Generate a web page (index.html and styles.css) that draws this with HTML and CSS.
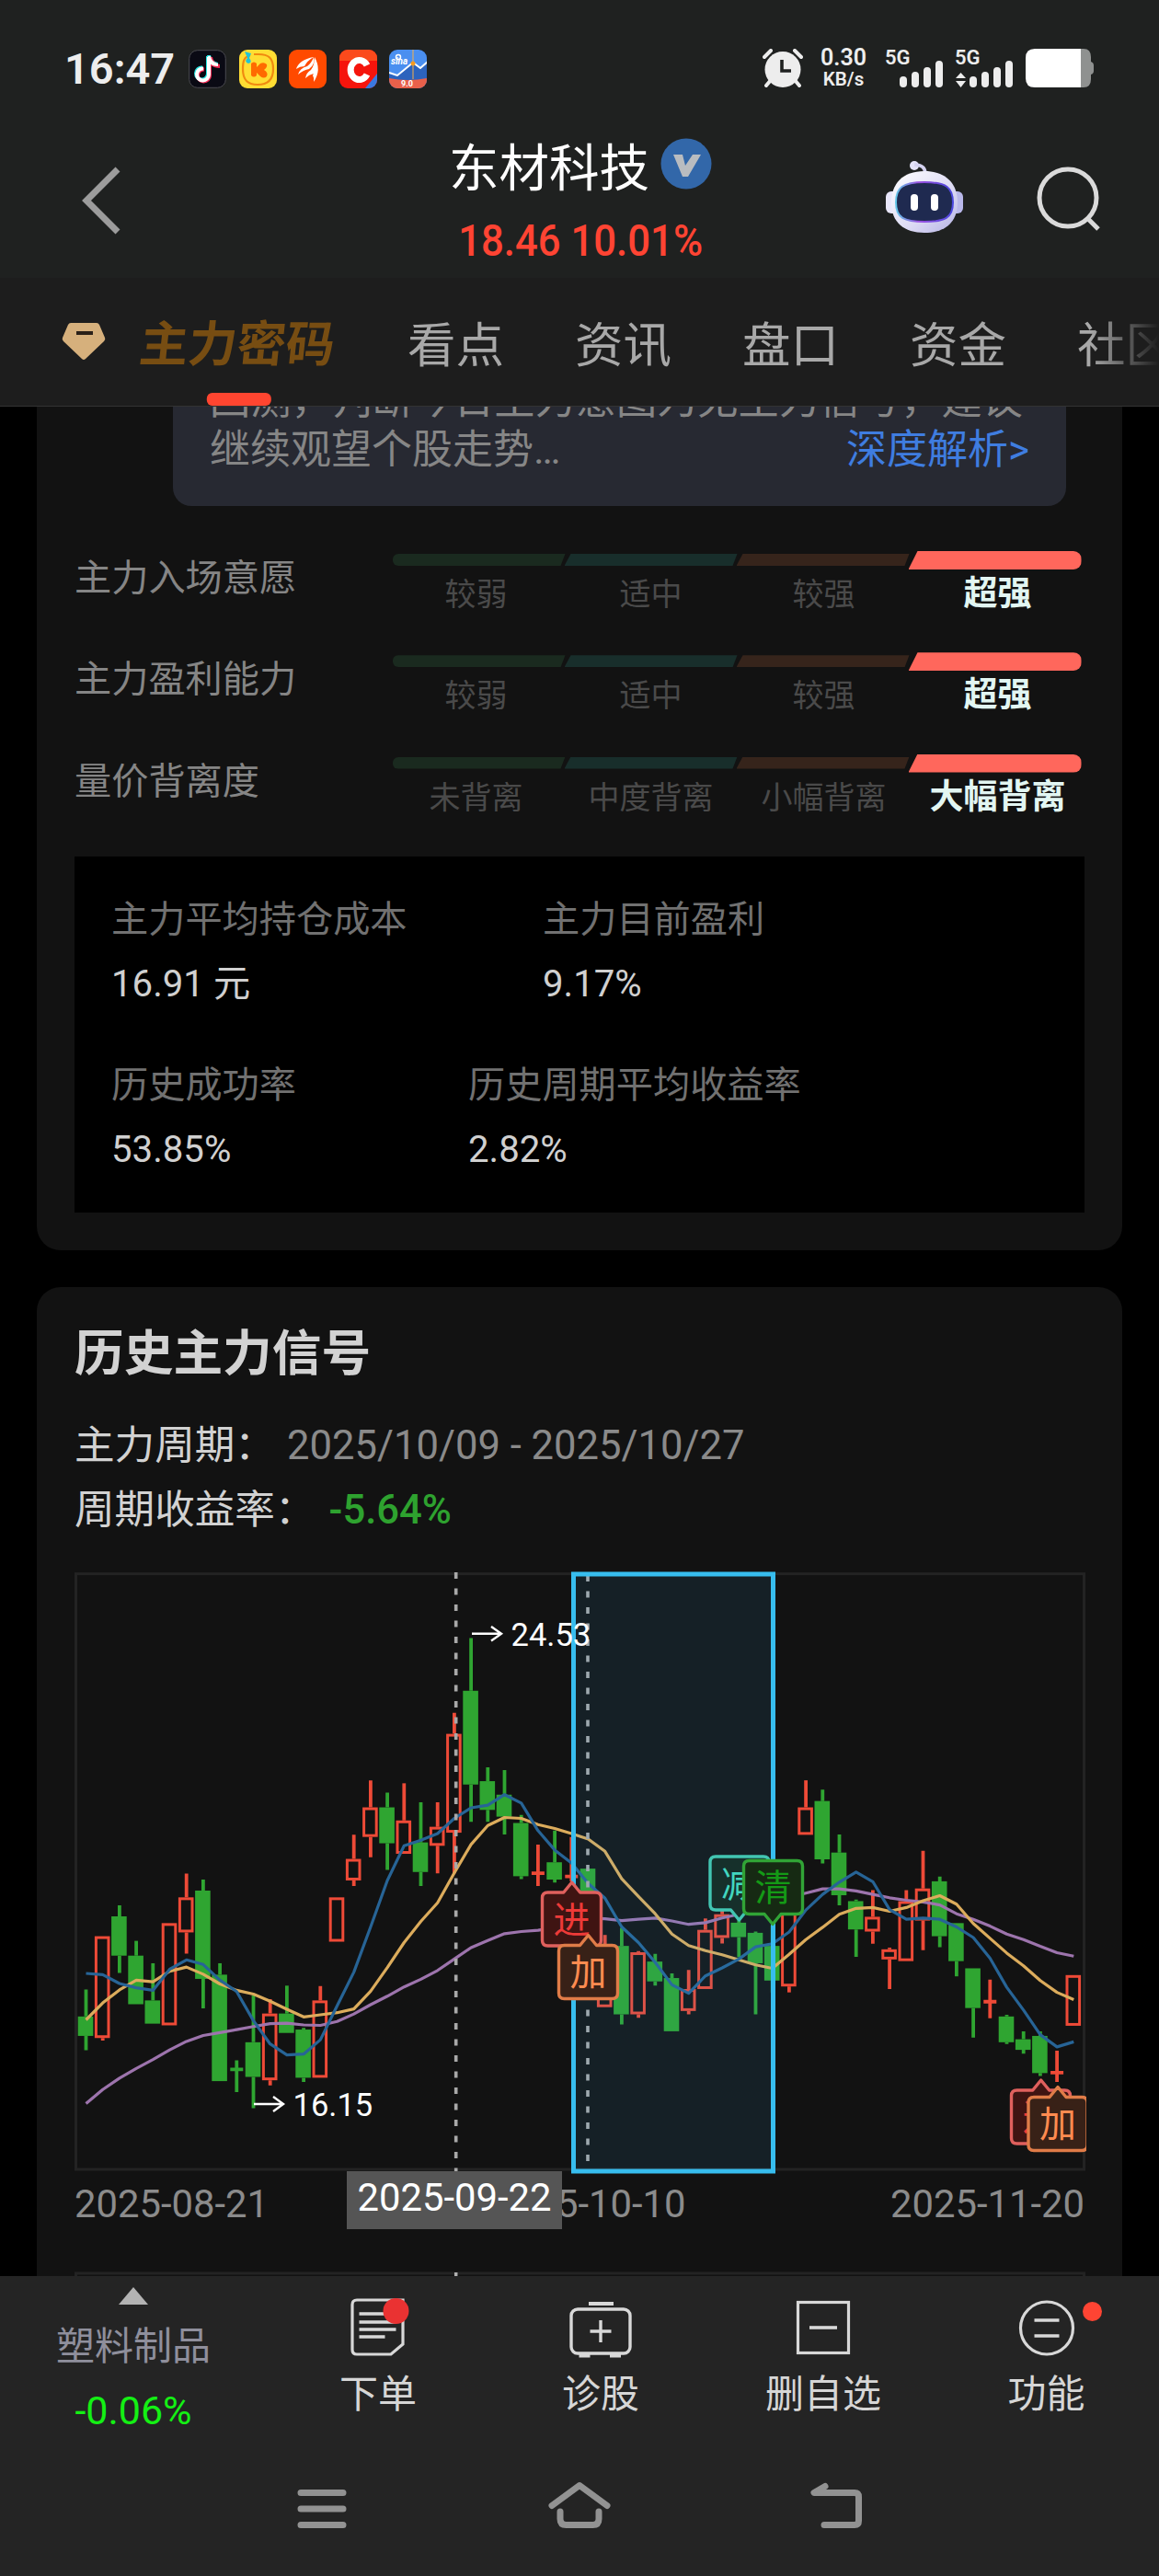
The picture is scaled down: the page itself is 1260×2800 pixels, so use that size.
FILE: index.html
```html
<!DOCTYPE html>
<html lang="zh-CN">
<head>
    <meta charset="UTF-8">
    <meta name="viewport" content="width=device-width, initial-scale=1.0">
    <title>东材科技 - 主力密码</title>
    <link rel="stylesheet" href="styles.css">
</head>
<body>

<div class="phone">
    <header class="header">
        <div class="status-bar">
            <span class="clock">16:47</span>
            <div class="app-icons">
                <svg width="41" height="42" viewBox="0 0 41 42">
                    <rect x=".7" y=".7" width="39.6" height="40.6" rx="9" fill="#0a0a14" stroke="#4a4a50"/>
                    <path d="M22 8v19a6.500 6.500 0 1 1-6-6.500" transform="translate(-1 -1)" fill="none" stroke="#25e5e2" stroke-width="4"/>
                    <path d="M21 7h4c1 5 4 7 8 8v4c-4 0-7-1-10-3z" transform="translate(-1 -1)" fill="#25e5e2"/>
                    <path d="M22 8v19a6.500 6.500 0 1 1-6-6.500" transform="translate(1 1)" fill="none" stroke="#f52c56" stroke-width="4"/>
                    <path d="M21 7h4c1 5 4 7 8 8v4c-4 0-7-1-10-3z" transform="translate(1 1)" fill="#f52c56"/>
                    <path d="M22 8v19a6.500 6.500 0 1 1-6-6.500" fill="none" stroke="#fff" stroke-width="4"/>
                    <path d="M21 7h3c1 5 4 7 8 8v3c-4 0-7-1-9-3z" fill="#fff"/>
                </svg>
                <svg width="41" height="42" viewBox="0 0 41 42">
                    <rect width="41" height="42" rx="9" fill="#ffdd33"/>
                    <path d="M12 6c-7 2-8 7-8 15 0 12 5 17 16 17s17-5 17-17S32 5 21 5h-5" fill="none" stroke="#f08a10" stroke-width="2.2"/>
                    <path d="M13 15q3-3 6 0v4l4-4q4-2 7 1 1 3-3 6 5 3 3 7-3 3-7 0l-4-4v3q-3 3-6 0z" fill="#ff6a00"/>
                    <path d="M6 2l7 2-2 5q4 5-1 6-5-2-1-6z" fill="#20c4d8"/>
                </svg>
                <svg width="41" height="42" viewBox="0 0 41 42">
                    <rect width="41" height="42" rx="9" fill="#ff4a00"/>
                    <path d="M8 21Q11 11 27 8q-7 4-10 10-5 0-9 3zM10 27q2-7 10-9 5-4 7-10 2 8-5 13-6 1-12 6zM18 31q1-6 6-9 4-5 4-14 4 11-1 18-5 1-9 5zM27 35q1-4-1-7 5-8 2-20 8 14-1 27z" fill="#fff"/>
                </svg>
                <svg width="41" height="42" viewBox="0 0 41 42">
                    <defs><clipPath id="rc"><rect width="41" height="42" rx="9"/></clipPath></defs>
                    <g clip-path="url(#rc)">
                        <rect width="41" height="42" fill="#f5140c"/>
                        <rect width="41" height="12" fill="#fb4a1c"/>
                        <path d="M30 17a9.500 10.500 0 1 0 0 10" fill="none" stroke="#fff" stroke-width="7"/>
                        <path d="M41 26v16H28z" fill="#3a78e0"/>
                    </g>
                </svg>
                <svg width="41" height="42" viewBox="0 0 41 42">
                    <g clip-path="url(#rc)">
                        <rect width="41" height="42" fill="#4a8ff0"/>
                        <path d="M0 26l8 3 18-15 8 6 7-7v20H0z" fill="#2c63bd"/>
                        <path d="M0 25l9 3 17-14 8 6 8-7" fill="none" stroke="#fff" stroke-width="2"/>
                        <path d="M26 0v32" stroke="#f5b04a" stroke-width="1"/>
                        <circle cx="26" cy="15" r="2.500" fill="#f59a20"/>
                        <path d="M0 31q20 4 41 0v11H0z" fill="#e8604a"/>
                        <circle cx="10" cy="8" r="2.500" fill="none" stroke="#fff" stroke-width="1.500"/>
                        <text x="2" y="16" class="app-sina">sina</text>
                        <text x="13" y="40" class="app-ver">9.0</text>
                    </g>
                </svg>
            </div>
            <div class="status-right">
                <svg class="alarm" width="44" height="42" viewBox="0 0 44 42">
                    <ellipse cx="22" cy="22.500" rx="19.500" ry="19.500" fill="#ededed"/>
                    <path d="M2 9l7-7M42 9l-7-7M4 40l5-6M40 40l-5-6" stroke="#ededed" stroke-width="4" stroke-linecap="round"/>
                    <path d="M21 12v12h10" fill="none" stroke="#1f2120" stroke-width="3.600"/>
                </svg>
                <div class="net-speed"><span>0.30</span><small>KB/s</small></div>
                <svg class="signal" width="64" height="42" viewBox="0 0 64 42">
                    <text x="0" y="17" class="net-type">5G</text>
                    <path d="M20 34v4M33 29v9M46 24v14M59 17v21" stroke="#ededed" stroke-width="8" stroke-linecap="round"/>
                </svg>
                <svg class="signal2" width="64" height="42" viewBox="0 0 64 42">
                    <text x="0" y="17" class="net-type">5G</text>
                    <path d="M1 32l5.500-6 5.500 6zM1 35l5.500 7 5.500-7z" fill="#ededed"/>
                    <path d="M20 34v4M33 29v9M46 24v14M59 17v21" stroke="#ededed" stroke-width="8" stroke-linecap="round"/>
                </svg>
                <svg width="74" height="42" viewBox="0 0 74 42">
                    <path d="M58 0h5q8 0 8 9v5q3 1 3 4v6q0 3-3 4v5q0 9-8 9h-5z" fill="#8f9190"/>
                    <path d="M60 0v42H10Q0 42 0 32V10Q0 0 10 0z" fill="#fff"/>
                </svg>
            </div>
        </div>

        <div class="title-row">
            <svg class="back" width="44" height="74" viewBox="0 0 44 74">
                <path d="M40 3L6 37l34 34" fill="none" stroke="#9c9c9c" stroke-width="7"/>
            </svg>
            <div class="stock">
                <h1 class="stock-name">东材科技
                    <svg width="56" height="56" viewBox="0 0 56 56">
                        <circle cx="28" cy="28" r="27.500" fill="#3267a9"/>
                        <path d="M14 18h10l3 12 8-12h9L30 42h-6z" fill="#b9bcc0"/>
                    </svg>
                </h1>
                <p class="stock-price">18.46 10.01%</p>
            </div>
            <div class="title-actions">
                <svg width="84" height="80" viewBox="0 0 84 80">
                    <defs>
                        <linearGradient id="head" x1="0" y1="0" x2="1" y2="1">
                            <stop offset="0" stop-color="#ffffff"/>
                            <stop offset=".6" stop-color="#dcdaf4"/>
                            <stop offset="1" stop-color="#b4b2e4"/>
                        </linearGradient>
                        <linearGradient id="face" x1="0" y1="0" x2="1" y2="0">
                            <stop offset="0" stop-color="#63c6e8"/>
                            <stop offset=".4" stop-color="#9a50e0"/>
                            <stop offset="1" stop-color="#4a48e0"/>
                        </linearGradient>
                    </defs>
                    <circle cx="31" cy="6" r="5" fill="#e4e2f8"/>
                    <path d="M31 5q12 0 12 10" fill="none" stroke="#d4d2f0" stroke-width="3.500"/>
                    <rect x="0" y="34" width="14" height="24" rx="6" fill="#e8e6fa"/>
                    <rect x="70" y="34" width="14" height="24" rx="6" fill="#b9b8ea"/>
                    <path d="M42 12C66 12 78 26 78 46 78 68 64 79 42 79S6 68 6 46C6 26 18 12 42 12z" fill="url(#head)"/>
                    <path d="M42 24c24 0 31 6 31 22 0 17-9 21-31 21s-31-4-31-21c0-16 7-22 31-22z" fill="#1f2a50" stroke="url(#face)" stroke-width="2"/>
                    <rect x="27" y="37" width="8" height="18" rx="4" fill="#fff"/>
                    <rect x="49" y="37" width="8" height="18" rx="4" fill="#fff"/>
                </svg>
                <svg class="search" width="72" height="74" viewBox="0 0 72 74">
                    <circle cx="35" cy="35" r="31" fill="none" stroke="#dadada" stroke-width="5"/>
                    <path d="M56 57l12 12" stroke="#dadada" stroke-width="5"/>
                </svg>
            </div>
        </div>
    </header>

    <nav class="tabs">
        <svg class="diamond" width="48" height="42" viewBox="0 0 48 42">
            <path d="M10 1h28q2 0 3 2l6 14q1 2-1 4L26 40q-2 2-4 0L2 21q-2-2-1-4L7 3q1-2 3-2z" fill="#d6b07c"/>
            <path d="M16 12h18" stroke="#2a2018" stroke-width="4"/>
        </svg>
        <a class="tab active">主力密码</a>
        <a class="tab">看点</a>
        <a class="tab">资讯</a>
        <a class="tab">盘口</a>
        <a class="tab">资金</a>
        <a class="tab">社区</a>
    </nav>

    <main class="content">
        <section class="card card-top">
            <div class="bubble">
                <p>回测，判断今日主力意图为无主力信号，建议</p>
                <p class="bubble-last">继续观望个股走势…<a class="more">深度解析&gt;</a></p>
            </div>

            <div class="ratings">
                <div class="rating">
                    <span class="rating-name">主力入场意愿</span>
                    <div class="levels">
                        <div class="level l1"><i></i><span>较弱</span></div>
                        <div class="level l2"><i></i><span>适中</span></div>
                        <div class="level l3"><i></i><span>较强</span></div>
                        <div class="level l4"><i></i><span>超强</span></div>
                    </div>
                </div>
                <div class="rating">
                    <span class="rating-name">主力盈利能力</span>
                    <div class="levels">
                        <div class="level l1"><i></i><span>较弱</span></div>
                        <div class="level l2"><i></i><span>适中</span></div>
                        <div class="level l3"><i></i><span>较强</span></div>
                        <div class="level l4"><i></i><span>超强</span></div>
                    </div>
                </div>
                <div class="rating">
                    <span class="rating-name">量价背离度</span>
                    <div class="levels">
                        <div class="level l1"><i></i><span>未背离</span></div>
                        <div class="level l2"><i></i><span>中度背离</span></div>
                        <div class="level l3"><i></i><span>小幅背离</span></div>
                        <div class="level l4"><i></i><span>大幅背离</span></div>
                    </div>
                </div>
            </div>

            <div class="stats">
                <div class="stats-row">
                    <div class="stat wide">
                        <p class="stat-name">主力平均持仓成本</p>
                        <p class="stat-value">16.91 元</p>
                    </div>
                    <div class="stat">
                        <p class="stat-name">主力目前盈利</p>
                        <p class="stat-value">9.17%</p>
                    </div>
                </div>
                <div class="stats-row">
                    <div class="stat narrow">
                        <p class="stat-name">历史成功率</p>
                        <p class="stat-value">53.85%</p>
                    </div>
                    <div class="stat">
                        <p class="stat-name">历史周期平均收益率</p>
                        <p class="stat-value">2.82%</p>
                    </div>
                </div>
            </div>
        </section>

        <section class="card card-history">
            <h2>历史主力信号</h2>
            <p class="line">主力周期：<span class="range">2025/10/09 - 2025/10/27</span></p>
            <p class="line">周期收益率：<span class="loss">-5.64%</span></p>

            <svg class="chart" id="chart" width="1100" height="670" viewBox="11 10 1100 670"></svg>

            <div class="dates">
                <span>2025-08-21</span>
                <span class="date-mid">2025-10-10</span>
                <span>2025-11-20</span>
                <span class="date-cursor">2025-09-22</span>
            </div>
            <svg class="chart-next" width="1100" height="8" viewBox="11 0 1100 8">
                <rect x="12.500" y="2" width="1096" height="40" fill="none" stroke="#232323" stroke-width="3"/>
                <path d="M425.700 1v7" stroke="#b0b0b0" stroke-width="3.500"/>
            </svg>
        </section>
    </main>

    <footer class="footer">
        <div class="toolbar">
            <div class="tool index">
                <svg width="32" height="19" viewBox="0 0 32 19"><path d="M16 0l16 19H0z" fill="#b3b3b3"/></svg>
                <span class="index-name">塑料制品</span>
                <span class="index-value">-0.06%</span>
            </div>
            <div class="tool">
                <svg width="70" height="70" viewBox="0 0 70 70">
                    <path d="M12 6h50v48L49 65H12q-5 0-5-5V11q0-5 5-5z" fill="none" stroke="#d8d8d8" stroke-width="3.200"/>
                    <path d="M14.500 21h40M14.500 30h40M14.500 38h40M14.500 46h28" stroke="#d8d8d8" stroke-width="3.400"/>
                    <circle cx="54.500" cy="18" r="14" fill="#ea3232"/>
                </svg>
                <span>下单</span>
            </div>
            <div class="tool">
                <svg width="70" height="70" viewBox="0 0 70 70">
                    <rect x="3" y="16" width="64" height="48" rx="7" fill="none" stroke="#d8d8d8" stroke-width="3.400"/>
                    <path d="M22 10h27" stroke="#d8d8d8" stroke-width="4"/>
                    <path d="M35 28v24M23.500 40h23" stroke="#d8d8d8" stroke-width="3.400"/>
                    <path d="M11.500 66.500h12M45 66.500h12" stroke="#d8d8d8" stroke-width="4"/>
                </svg>
                <span>诊股</span>
            </div>
            <div class="tool">
                <svg width="70" height="70" viewBox="0 0 70 70">
                    <rect x="7.500" y="8.500" width="55" height="55" fill="none" stroke="#d8d8d8" stroke-width="3.200"/>
                    <path d="M20 36h30" stroke="#d8d8d8" stroke-width="3.600"/>
                </svg>
                <span>删自选</span>
            </div>
            <div class="tool">
                <svg width="70" height="70" viewBox="0 0 70 70">
                    <circle cx="35" cy="36.500" r="28.500" fill="none" stroke="#d8d8d8" stroke-width="3.200"/>
                    <path d="M21.500 28h27M21.500 45h27" stroke="#d8d8d8" stroke-width="3.600"/>
                </svg>
                <span>功能</span>
                <b class="dot"></b>
            </div>
        </div>
        <div class="sys-nav">
            <svg width="70" height="60" viewBox="0 0 70 60">
                <path d="M12 12.500h46M12 30h46M12 47.500h46" stroke="#929292" stroke-width="7" stroke-linecap="round"/>
            </svg>
            <svg width="70" height="60" viewBox="0 0 70 60">
                <path d="M5 26.500L35 4.500l30 22M14 33v8q0 6.500 6.500 6.500h29q6.500 0 6.500-6.500v-8" fill="none" stroke="#929292" stroke-width="7" stroke-linecap="round" stroke-linejoin="round"/>
            </svg>
            <svg width="70" height="60" viewBox="0 0 70 60">
                <path d="M22 5.500L10 12.500h44q4.500 0 4.500 4.500v26q0 4.500-4.500 4.500H21" fill="none" stroke="#929292" stroke-width="7" stroke-linecap="round" stroke-linejoin="round"/>
            </svg>
        </div>
    </footer>
</div>

<script src="chart.js"></script>
</body>
</html>
```

FILE: styles.css
```css
body {
    margin: 0;
    background-color: #000;
    font-family: Roboto, 'Noto Sans CJK SC', sans-serif;
    color: #d2d2d2;
}

p, h1, h2 {
    margin: 0;
    font-weight: normal;
}

svg {
    display: block;
    flex: none;
}

.phone {
    width: 1260px;
    height: 2800px;
    display: flex;
    flex-direction: column;
    overflow: hidden;
}

/* header */
.header {
    height: 302px;
    flex: none;
    background-color: #1f2120;
}

.status-bar {
    display: flex;
    align-items: center;
    height: 42px;
    padding: 54px 71px 0 70px;
}

.clock {
    width: 135px;
    font-size: 47px;
    font-weight: 600;
    line-height: 42px;
    color: #ededed;
}

.app-icons {
    display: flex;
    gap: 13.5px;
}

.app-sina {
    font-size: 10px;
    font-style: italic;
    font-weight: bold;
    fill: #fff;
}

.app-ver {
    font-size: 9px;
    font-weight: bold;
    fill: #fff;
}

.status-right {
    display: flex;
    margin-left: auto;
}

.net-speed {
    display: flex;
    flex-direction: column;
    align-items: center;
    width: 60px;
    margin: -1px 15px 0 14px;
    font-weight: 600;
    color: #ededed;
}

.net-speed span {
    font-size: 25px;
    line-height: 22px;
}

.net-speed small {
    font-size: 20.5px;
    line-height: 24px;
}

.net-type {
    font-size: 22px;
    font-weight: 600;
    fill: #ededed;
}

.signal {
    margin-right: 12px;
}

.signal2 {
    margin-right: 13px;
}

.title-row {
    display: grid;
    grid-template-columns: 1fr auto 1fr;
    align-items: start;
    padding: 56px 62px 0 88px;
}

.back {
    margin-top: 29px;
}

.stock {
    display: flex;
    flex-direction: column;
    align-items: center;
    margin-left: -24px;
}

.stock-name {
    display: flex;
    align-items: center;
    gap: 12px;
    font-size: 54.500px;
    line-height: 62px;
    color: #fff;
}

.stock-name svg {
    margin-top: -10px;
}

.stock-price {
    margin-top: 23px;
    font-size: 48px;
    font-weight: 500;
    line-height: 50px;
    white-space: nowrap;
    color: #ff4433;
    transform: scaleX(.91);
}

.title-actions {
    display: flex;
    justify-content: flex-end;
    gap: 79px;
    margin-top: 22px;
}

.search {
    margin-top: 6px;
}

/* tabs */
.tabs {
    position: relative;
    display: flex;
    flex: none;
    height: 132px;
    padding: 7px 0 0 67px;
    background-color: #1d1d1d;
    border-bottom: 1px solid #333;
    overflow: hidden;
    white-space: nowrap;
}

.tabs::after {
    content: '';
    position: absolute;
    top: 0;
    right: 0;
    width: 75px;
    height: 100%;
    background: linear-gradient(90deg, rgba(29, 29, 29, 0), #1d1d1d);
}

.diamond {
    margin: 41px 37px 0 0;
}

.tab {
    margin-right: 77px;
    font-size: 52.500px;
    line-height: 134px;
    color: #a8a8a8;
}

.tab.active {
    position: relative;
    font-size: 53px;
    line-height: 132px;
    font-weight: bold;
    color: #774d12;
    margin-right: 79px;
    transform: skewX(-6deg);
}

.tab.active::after {
    content: '';
    position: absolute;
    left: 79px;
    bottom: 0;
    width: 70px;
    height: 14px;
    border-radius: 6px;
    background-color: #ff4530;
    transform: skewX(6deg);
}

/* content */
.content {
    height: 2032px;
    flex: none;
    padding: 0 40px;
    box-sizing: border-box;
    overflow: hidden;
}

.card {
    padding: 0 41px;
    background-color: #121212;
    border-radius: 26px;
    overflow: hidden;
}

.card-top {
    height: 917px;
    border-radius: 0 0 26px 26px;
}

.bubble {
    margin: -34px 20px 0 107px;
    padding: 0 40px 34px;
    border-radius: 0 0 20px 20px;
    background-color: #272932;
    font-size: 44px;
    line-height: 54px;
    white-space: nowrap;
    color: #868686;
}

.bubble-last {
    display: flex;
    justify-content: space-between;
}

.bubble p:first-child {
    font-size: 44.200px;
}

.more {
    color: #3f7de0;
}

.ratings {
    margin-top: 24px;
}

.rating {
    display: flex;
    height: 110.3px;
}

.rating-name {
    width: 346px;
    font-size: 40.200px;
    line-height: 109px;
    color: #858585;
}

.levels {
    display: grid;
    grid-template-columns: repeat(4, 187px);
    padding-top: 25px;
}

.level {
    display: flex;
    flex-direction: column;
    align-items: center;
}

.level i {
    width: 188px;
    height: 13px;
    margin: 3px 0 12px;
    clip-path: polygon(7px 0, 100% 0, calc(100% - 5px) 100%, 0 100%);
}

.level span {
    font-size: 34px;
    line-height: 38px;
    color: #4a4a4a;
}

.l1 i {
    clip-path: polygon(0 0, 100% 0, calc(100% - 5px) 100%, 0 100%);
    border-radius: 6px 0 0 6px;
    background-color: #1a2a1f;
}

.l1 span {
    padding-right: 6px;
}

.l2 i {
    background-color: #182e2b;
}

.l3 i {
    background-color: #36241b;
}

.l3 span {
    padding-left: 2px;
}

.l4 i {
    height: 20px;
    margin: 0 0 8px;
    clip-path: polygon(10px 0, 100% 0, 100% 100%, 0 100%);
    border-radius: 0 9px 9px 0;
    background-color: #ff675c;
}

.l4 span {
    font-size: 37px;
    font-weight: bold;
    color: #e2f6f2;
    padding-left: 6px;
}

.stats {
    display: flex;
    flex-direction: column;
    gap: 60px;
    height: 343px;
    margin-top: 26px;
    padding-top: 44px;
    padding-left: 40px;
    background-color: #000;
}

.stats-row {
    display: flex;
}

.stat {
    font-size: 40.200px;
    line-height: 50px;
}

.stat.wide {
    width: 469px;
}

.stat.narrow {
    width: 388px;
}

.stat-name {
    margin-bottom: 20px;
    color: #717171;
}

.stat-value {
    color: #d0d0d0;
}

.card-history {
    height: 1200px;
    margin-top: 40px;
}

.card-history h2 {
    padding-top: 38px;
    margin-bottom: 30px;
    font-size: 53.700px;
    font-weight: bold;
    line-height: 70px;
}

.line {
    font-size: 43.600px;
    line-height: 70px;
}

.range {
    margin-left: 13px;
    color: #8a8a8a;
}

.loss {
    margin-left: 15px;
    font-weight: 500;
    color: #2ea22f;
}

/* chart */
.chart {
    margin-top: 22px;
}

.candle-up {
    fill: none;
    stroke: #ee4a37;
    stroke-width: 3;
}

.candle-down {
    fill: #2fa531;
}

.wick-up {
    stroke: #ee4a37;
    stroke-width: 3.800;
}

.wick-down {
    stroke: #2fa531;
    stroke-width: 3.800;
}

.ma {
    fill: none;
    stroke-width: 3.200;
    stroke-linejoin: round;
}

.cross {
    stroke: #a9a9a9;
    stroke-width: 3.600;
    stroke-dasharray: 7 10.500;
}

.frame {
    fill: none;
    stroke: #232323;
    stroke-width: 3;
}

.period {
    fill: rgba(50, 180, 240, .09);
    stroke: #37bdee;
    stroke-width: 5;
}

.peak {
    font-size: 34.500px;
    fill: #fff;
}

.arrow {
    fill: none;
    stroke: #fff;
    stroke-width: 2.400;
}

.tag path {
    stroke-width: 3.400;
    stroke-linejoin: round;
}

.tag text {
    font-size: 40px;
    text-anchor: middle;
}

.tag-in path { fill: #3f1412; stroke: #e0605d; }
.tag-in text { fill: #ee3a38; }
.tag-add path { fill: #382117; stroke: #e07c48; }
.tag-add text { fill: #ff8b50; }
.tag-cut path { fill: #16302b; stroke: #42c5b2; }
.tag-cut text { fill: #42d6c0; }
.tag-out path { fill: #162a13; stroke: #31a436; }
.tag-out text { fill: #149a16; }

.dates {
    position: relative;
    display: flex;
    justify-content: space-between;
    height: 99px;
    padding: 1px 0 0;
    font-size: 41.800px;
    line-height: 52px;
    color: #8b8b8b;
}

.date-mid {
    margin-left: 20px;
}

.date-cursor {
    position: absolute;
    left: 296px;
    top: -9px;
    width: 234px;
    height: 63px;
    line-height: 58px;
    text-align: center;
    color: #fff;
    background-color: #555;
}

/* footer */
.footer {
    flex: 1;
    background-color: #242424;
}

.toolbar {
    display: grid;
    grid-template-columns: 290px 242px 242px 242px 243px;
    height: 210px;
}

.tool {
    position: relative;
    display: flex;
    flex-direction: column;
    align-items: center;
    padding-top: 20px;
    font-size: 42px;
    line-height: 50px;
    color: #d6d6d6;
}

.tool svg {
    margin-bottom: 14px;
}

.tool.index {
    padding: 12px 0 0;
}

.tool.index svg {
    margin-bottom: 21px;
}

.index-name {
    color: #8f8f9c;
}

.index-value {
    margin-top: 19px;
    font-size: 43px;
    color: #14f014;
}

.dot {
    position: absolute;
    left: 161px;
    top: 28px;
    width: 21px;
    height: 21px;
    border-radius: 50%;
    background-color: #ff4433;
}

.sys-nav {
    display: flex;
    justify-content: center;
    gap: 210px;
    padding-top: 13px;
}
```

FILE: chart.js
```js
// up/down, high, body top, body bottom, low
const candles = [
    ['d', 1031, 1095, 1141, 1175], ['u', 905, 905, 1146, 1152], ['d', 832, 858, 951, 992],
    ['d', 916, 951, 1066, 1066], ['d', 969, 1057, 1112, 1112], ['u', 874, 874, 1116, 1116],
    ['u', 757, 813, 896, 946], ['d', 771, 797, 1006, 1076], ['d', 969, 996, 1248, 1248],
    ['d', 1199, 1217, 1224, 1274], ['d', 1045, 1156, 1238, 1312], ['u', 1054, 1088, 1246, 1258],
    ['d', 1022, 1088, 1134, 1134], ['d', 1122, 1126, 1240, 1250], ['u', 1023, 1057, 1240, 1240],
    ['u', 813, 813, 918, 918], ['u', 665, 722, 773, 786], ['u', 536, 600, 670, 718],
    ['d', 565, 600, 685, 748], ['u', 543, 631, 710, 710], ['d', 588, 683, 753, 786],
    ['u', 588, 646, 691, 756], ['u', 376, 426, 660, 756], ['d', 199, 324, 546, 634],
    ['d', 505, 538, 606, 634], ['d', 512, 570, 622, 664], ['d', 618, 637, 763, 770],
    ['u', 688, 753, 759, 786], ['d', 655, 730, 771, 778], ['u', 670, 760, 767, 775],
    ['d', 745, 745, 830, 830], ['u', 902, 930, 1073, 1073], ['d', 885, 928, 1090, 1114],
    ['u', 940, 943, 1090, 1098], ['d', 947, 965, 1012, 1022], ['d', 993, 1004, 1130, 1130],
    ['u', 985, 1030, 1082, 1090], ['u', 863, 890, 1030, 1030], ['u', 845, 853, 909, 922],
    ['d', 850, 873, 907, 955], ['d', 894, 897, 969, 1090], ['d', 880, 928, 1010, 1038],
    ['u', 800, 800, 1024, 1038], ['u', 536, 600, 665, 665], ['d', 558, 585, 723, 733],
    ['d', 664, 707, 808, 832], ['d', 818, 822, 889, 954], ['u', 796, 859, 894, 923],
    ['u', 932, 936, 960, 1030], ['u', 796, 822, 964, 964], ['u', 703, 792, 868, 938],
    ['d', 764, 775, 905, 931], ['d', 874, 874, 964, 1000], ['d', 981, 981, 1075, 1145],
    ['u', 1008, 1057, 1063, 1099], ['d', 1091, 1095, 1156, 1160], ['d', 1130, 1149, 1174, 1183],
    ['d', 1130, 1141, 1229, 1236], ['u', 1176, 1225, 1231, 1250], ['u', 997, 997, 1117, 1117]
];

const ma5 = [993, 996, 1017, 1027, 1033, 983, 961, 972, 1009, 1036, 1105, 1160, 1186, 1184, 1150, 1070, 990, 883, 773, 691,
    678, 662, 626, 601, 595, 570, 590, 655, 701, 732, 780, 815, 883, 920, 967, 1020, 1040, 999, 980, 959,
    930, 923, 895, 843, 806, 777, 753, 776, 842, 865, 862, 865, 883, 908, 957, 1026, 1080, 1138, 1167, 1155];
const ma10 = [1103, 1063, 1032, 1009, 1013, 988, 978, 995, 1018, 1033, 1042, 1059, 1078, 1096, 1091, 1086, 1077, 1035, 979, 920,
    870, 826, 755, 688, 643, 624, 626, 641, 650, 662, 675, 704, 769, 811, 852, 900, 927, 939, 949, 961,
    973, 981, 948, 913, 884, 853, 839, 837, 846, 837, 821, 809, 829, 875, 910, 945, 975, 1010, 1038, 1055];
const ma20 = [1301, 1268, 1241, 1218, 1197, 1174, 1154, 1140, 1133, 1126, 1119, 1112, 1111, 1115, 1116, 1107, 1089, 1067, 1047, 1025,
    1007, 986, 959, 932, 915, 899, 894, 891, 885, 872, 862, 864, 868, 865, 862, 869, 877, 873, 862, 853,
    835, 818, 812, 803, 793, 793, 798, 806, 814, 820, 824, 831, 852, 865, 881, 900, 913, 929, 944, 952];

const X = i => 23.5 + 18.2 * i;
const Y = v => v * 0.4592;
const line = (data, color) =>
    `<polyline class="ma" stroke="${color}" points="${data.map((v, i) => X(i).toFixed(1) + ',' + Y(v).toFixed(1)).join(' ')}"/>`;

function candle([dir, high, top, bottom, low], i) {
    const x = X(i);
    const up = dir === 'u';
    const wick = `class="wick-${up ? 'up' : 'down'}"`;
    // open and close almost equal: draw a cross
    if (bottom - top < 10) {
        return `<path ${wick} d="M${x} ${Y(high)}V${Y(low)}M${x - 7} ${Y((top + bottom) / 2)}h14"/>`;
    }
    const wicks = `<path ${wick} d="M${x} ${Y(high)}V${Y(top)}M${x} ${Y(bottom)}V${Y(low)}"/>`;
    if (up) {
        return wicks + `<rect class="candle-up" x="${x - 7.3}" y="${Y(top) + 1.5}" width="13.6" height="${Y(bottom - top) - 3}"/>`;
    }
    return wicks + `<rect class="candle-down" x="${x - 8.8}" y="${Y(top)}" width="16.6" height="${Y(bottom - top)}"/>`;
}

// rounded box with a small pointer on its top or bottom edge
function tag(cls, text, x, y, tip, down) {
    const w = 64, h = 58;
    const top = down ? 'h52' : `H${tip - 9}l9 -11l9 11H${x + w - 6}`;
    const bot = down ? `H${tip + 9}l-9 11l-9 -11H${x + 6}` : 'h-52';
    const d = `M${x + 6} ${y}${top}q6 0 6 6v${h - 12}q0 6 -6 6${bot}q-6 0 -6 -6v-${h - 12}q0 -6 6 -6z`;
    return `<g class="tag ${cls}"><path d="${d}"/><text x="${x + w / 2}" y="${y + h / 2 + 14.5}">${text}</text></g>`;
}

document.getElementById('chart').innerHTML =
    '<rect class="frame" x="12.5" y="21.6" width="1096" height="647.4"/>' +
    candles.map(candle).join('') +
    line(ma20, '#9d74ad') + line(ma10, '#dcac5c') + line(ma5, '#276496') +
    '<path class="cross" d="M425.7 20V671M569 23V669"/>' +
    '<rect class="period" x="553.5" y="22" width="217" height="649"/>' +
    '<path class="arrow" d="M443 86.8h31M464 79l11 7.8l-11 7.8M206 598h31M227 590l11 8l-11 8"/>' +
    '<text class="peak" x="485.5" y="99.6">24.53</text>' +
    '<text class="peak" x="248.5" y="610.6">16.15</text>' +
    tag('tag-in', '进', 519.5, 368, 551.7) +
    tag('tag-add', '加', 537.5, 425.5, 569.5) +
    tag('tag-cut', '减', 702, 329, 733.5, true) +
    tag('tag-out', '清', 738.5, 333.5, 770, true) +
    tag('tag-in', '进', 1029.5, 583, 1061.7) +
    tag('tag-add', '加', 1048, 590.5, 1080);
```
